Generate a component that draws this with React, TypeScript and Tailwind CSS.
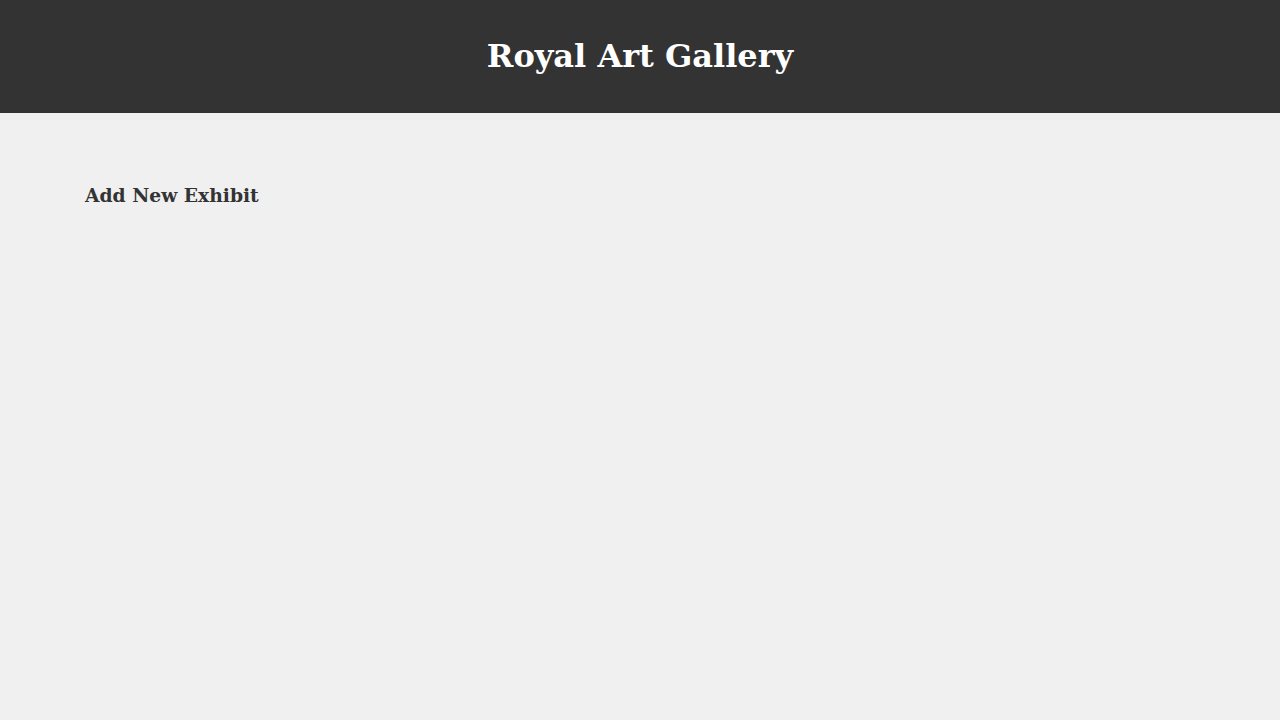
export default function App() {
  return (
    <div className="min-h-screen bg-[#f0f0f0] font-['DejaVu_Serif',serif]">
      <header className="h-[113px] bg-[#333333] flex items-center justify-center pb-[2px]">
        <h1 className="text-[32px] font-bold text-white leading-none">Royal Art Gallery</h1>
      </header>
      <main className="px-[85px] pt-[71px]">
        <h2 className="text-[18.72px] font-bold text-[#333333] leading-[22px]">Add New Exhibit</h2>
      </main>
    </div>
  );
}
